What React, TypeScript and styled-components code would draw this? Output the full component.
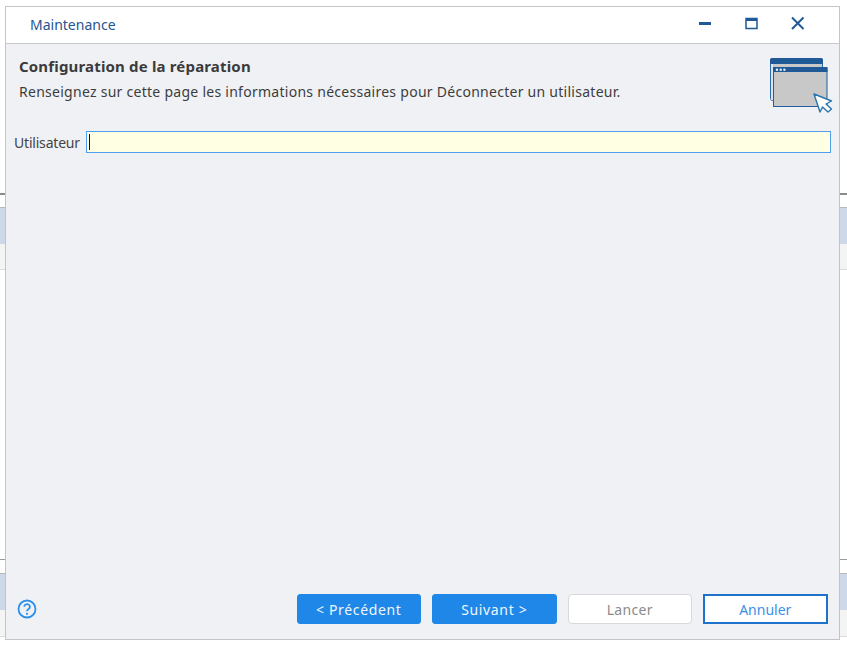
import React from "react";
import styled, { createGlobalStyle } from "styled-components";

const Global = createGlobalStyle`
  html, body { margin: 0; padding: 0; background: #fff; overflow: hidden; }
  body { font-family: "Noto Sans", "Liberation Sans", sans-serif; }
`;

const Page = styled.div`
  position: relative;
  width: 847px;
  height: 645px;
  overflow: hidden;
  background: #fff;
`;

const Backdrop = styled.div`
  display: flex;
  flex-direction: column;
  width: 100%;
  height: 100%;
`;

const Strip = styled.div<{ $h: number; $c: string }>`
  flex: none;
  height: ${(p) => p.$h}px;
  background: ${(p) => p.$c};
`;

const Window = styled.div`
  position: absolute;
  left: 5px;
  top: 6px;
  width: 835px;
  height: 634px;
  box-sizing: border-box;
  display: flex;
  flex-direction: column;
  border: 1px solid #c4c4c6;
  background: #f0f1f4;
`;

const TitleBar = styled.header`
  flex: none;
  height: 34px;
  box-sizing: content-box;
  display: flex;
  align-items: center;
  background: #fff;
  border-bottom: 1px solid #c9c9cb;
  padding: 0 0 2px 24px;
`;

const Title = styled.h1`
  flex: 1;
  margin: 0;
  font-size: 14px;
  font-weight: 400;
  color: #24558f;
`;

const WinButtons = styled.div`
  display: flex;
  align-items: center;
  margin-right: 30px;
  gap: 24px;
`;

const WinButton = styled.span`
  width: 22px;
  height: 22px;
  display: flex;
  color: #1f5a96;
`;

const Body = styled.main`
  flex: 1;
  display: flex;
  flex-direction: column;
  min-height: 0;
`;

const Header = styled.section`
  display: flex;
  justify-content: space-between;
  height: 87px;
  padding: 13px 6px 0 13px;
  box-sizing: border-box;
`;

const HeaderText = styled.div`
  display: flex;
  flex-direction: column;
  gap: 5px;
`;

const Heading = styled.h2`
  margin: 0;
  font-size: 15px;
  line-height: 19px;
  letter-spacing: 0.17px;
  font-weight: 700;
  color: #3b3b3b;
`;

const Sub = styled.p`
  margin: 0;
  font-size: 14px;
  line-height: 20px;
  padding-top: 1px;
  letter-spacing: 0.27px;
  color: #3d3d3d;
`;

const HeaderIcon = styled.svg`
  flex: none;
`;

const FormRow = styled.div`
  display: flex;
  align-items: center;
  gap: 6px;
  padding: 0 8px;
`;

const Label = styled.label`
  font-size: 14px;
  letter-spacing: -0.2px;
  color: #444;
`;

const Field = styled.div`
  flex: 1;
  height: 22px;
  box-sizing: border-box;
  border: 1px solid #4f9fea;
  background: #ffffe3;
  display: flex;
  align-items: center;
  padding-left: 2px;
`;

const Caret = styled.span`
  width: 1px;
  height: 16px;
  background: #111;
`;

const Footer = styled.footer`
  margin-top: auto;
  display: flex;
  align-items: center;
  gap: 11px;
  padding: 0 11.5px 15px 11px;
`;

const Help = styled.span`
  display: flex;
  margin-right: auto;
  width: 20px;
  height: 20px;
`;

const Button = styled.button<{ $kind: "primary" | "disabled" | "outline" }>`
  width: 124.5px;
  height: 30px;
  box-sizing: border-box;
  padding: 0;
  font: 400 14px "Noto Sans", "Liberation Sans", sans-serif;
  ${(p) =>
    p.$kind === "primary"
      ? "background:#1f87e8;color:#eef6fd;border:1px solid #1f87e8;border-radius:3px;letter-spacing:.65px;"
      : p.$kind === "disabled"
      ? "background:#fff;color:#8b8b8b;border:1px solid #d9d9d9;border-radius:4px;letter-spacing:.3px;"
      : "background:#fff;color:#3b8fe6;border:2px solid #1f72c9;border-radius:0;"}
`;

const WizardIcon = () => (
  <HeaderIcon width="64" height="56" viewBox="0 0 64 56" fill="none">
    <rect x="1.5" y="1.5" width="52" height="42" rx="2" fill="#c8c8c8" stroke="#2b6aa6" />
    <path d="M1 7V3a2 2 0 0 1 2-2h49a2 2 0 0 1 2 2v4z" fill="#1f5a96" />
    <rect x="2" y="7" width="2" height="36" fill="#dfe4ec" />
    <rect x="4.5" y="10.5" width="53.5" height="39" fill="#c8c8c8" stroke="#1f5f9e" />
    <path d="M4 15v-3a2 2 0 0 1 2-2h50.5a2 2 0 0 1 2 2v3z" fill="#1f5a96" />
    <circle cx="8" cy="12.7" r="1.2" fill="#e8eef6" />
    <circle cx="11.7" cy="12.7" r="1.2" fill="#e8eef6" />
    <circle cx="15.4" cy="12.7" r="1.2" fill="#e8eef6" />
    <path
      d="M45 37l17.5 7-5.5 3 5.5 5-3.5 3-5.5-5-2.5 5z"
      fill="#fff"
      stroke="#2a75ad"
      strokeWidth="1.4"
      strokeLinejoin="round"
    />
  </HeaderIcon>
);

export default function App() {
  return (
    <Page>
      <Global />
      <Backdrop>
        <Strip $h={193} $c="#fff" />
        <Strip $h={2} $c="#8c8c8c" />
        <Strip $h={12} $c="#fff" />
        <Strip $h={1} $c="#b8b8b8" />
        <Strip $h={36} $c="#cdd8e8" />
        <Strip $h={25} $c="#f4f4f4" />
        <Strip $h={1} $c="#dcdcdc" />
        <Strip $h={289} $c="#fff" />
        <Strip $h={1} $c="#9a9a9a" />
        <Strip $h={13} $c="#fff" />
        <Strip $h={1} $c="#b8b8b8" />
        <Strip $h={36} $c="#cdd8e8" />
        <Strip $h={26} $c="#f4f4f4" />
        <Strip $h={1} $c="#dcdcdc" />
      </Backdrop>
      <Window>
        <TitleBar>
          <Title>Maintenance</Title>
          <WinButtons>
            <WinButton>
              <svg width="22" height="22" viewBox="0 0 22 22">
                <rect x="4" y="9" width="12" height="3" fill="currentColor" />
              </svg>
            </WinButton>
            <WinButton>
              <svg width="22" height="22" viewBox="0 0 22 22">
                <rect x="5" y="5.5" width="11" height="10" fill="none" stroke="currentColor" strokeWidth="1.5" />
                <rect x="5" y="5" width="11" height="3" fill="currentColor" />
              </svg>
            </WinButton>
            <WinButton>
              <svg width="22" height="22" viewBox="0 0 22 22">
                <path d="M5 4.5l11.5 11.5M16.5 4.5L5 16" stroke="currentColor" strokeWidth="2" fill="none" />
              </svg>
            </WinButton>
          </WinButtons>
        </TitleBar>
        <Body>
          <Header>
            <HeaderText>
              <Heading>Configuration de la réparation</Heading>
              <Sub>Renseignez sur cette page les informations nécessaires pour Déconnecter un utilisateur.</Sub>
            </HeaderText>
            <WizardIcon />
          </Header>
          <FormRow>
            <Label>Utilisateur</Label>
            <Field>
              <Caret />
            </Field>
          </FormRow>
          <Footer>
            <Help>
              <svg width="20" height="20" viewBox="0 0 20 20">
                <circle cx="10" cy="10" r="8.5" fill="none" stroke="#2d8fe8" strokeWidth="1.8" />
                <path d="M7.3 7.8a2.8 2.6 0 1 1 4.3 2.2c-1 .7-1.6 1.1-1.6 2.2" fill="none" stroke="#2d8fe8" strokeWidth="1.8" />
                <circle cx="10" cy="14.8" r="1.1" fill="#2d8fe8" />
              </svg>
            </Help>
            <Button $kind="primary">&lt; Précédent</Button>
            <Button $kind="primary">Suivant &gt;</Button>
            <Button $kind="disabled">Lancer</Button>
            <Button $kind="outline">Annuler</Button>
          </Footer>
        </Body>
      </Window>
    </Page>
  );
}
